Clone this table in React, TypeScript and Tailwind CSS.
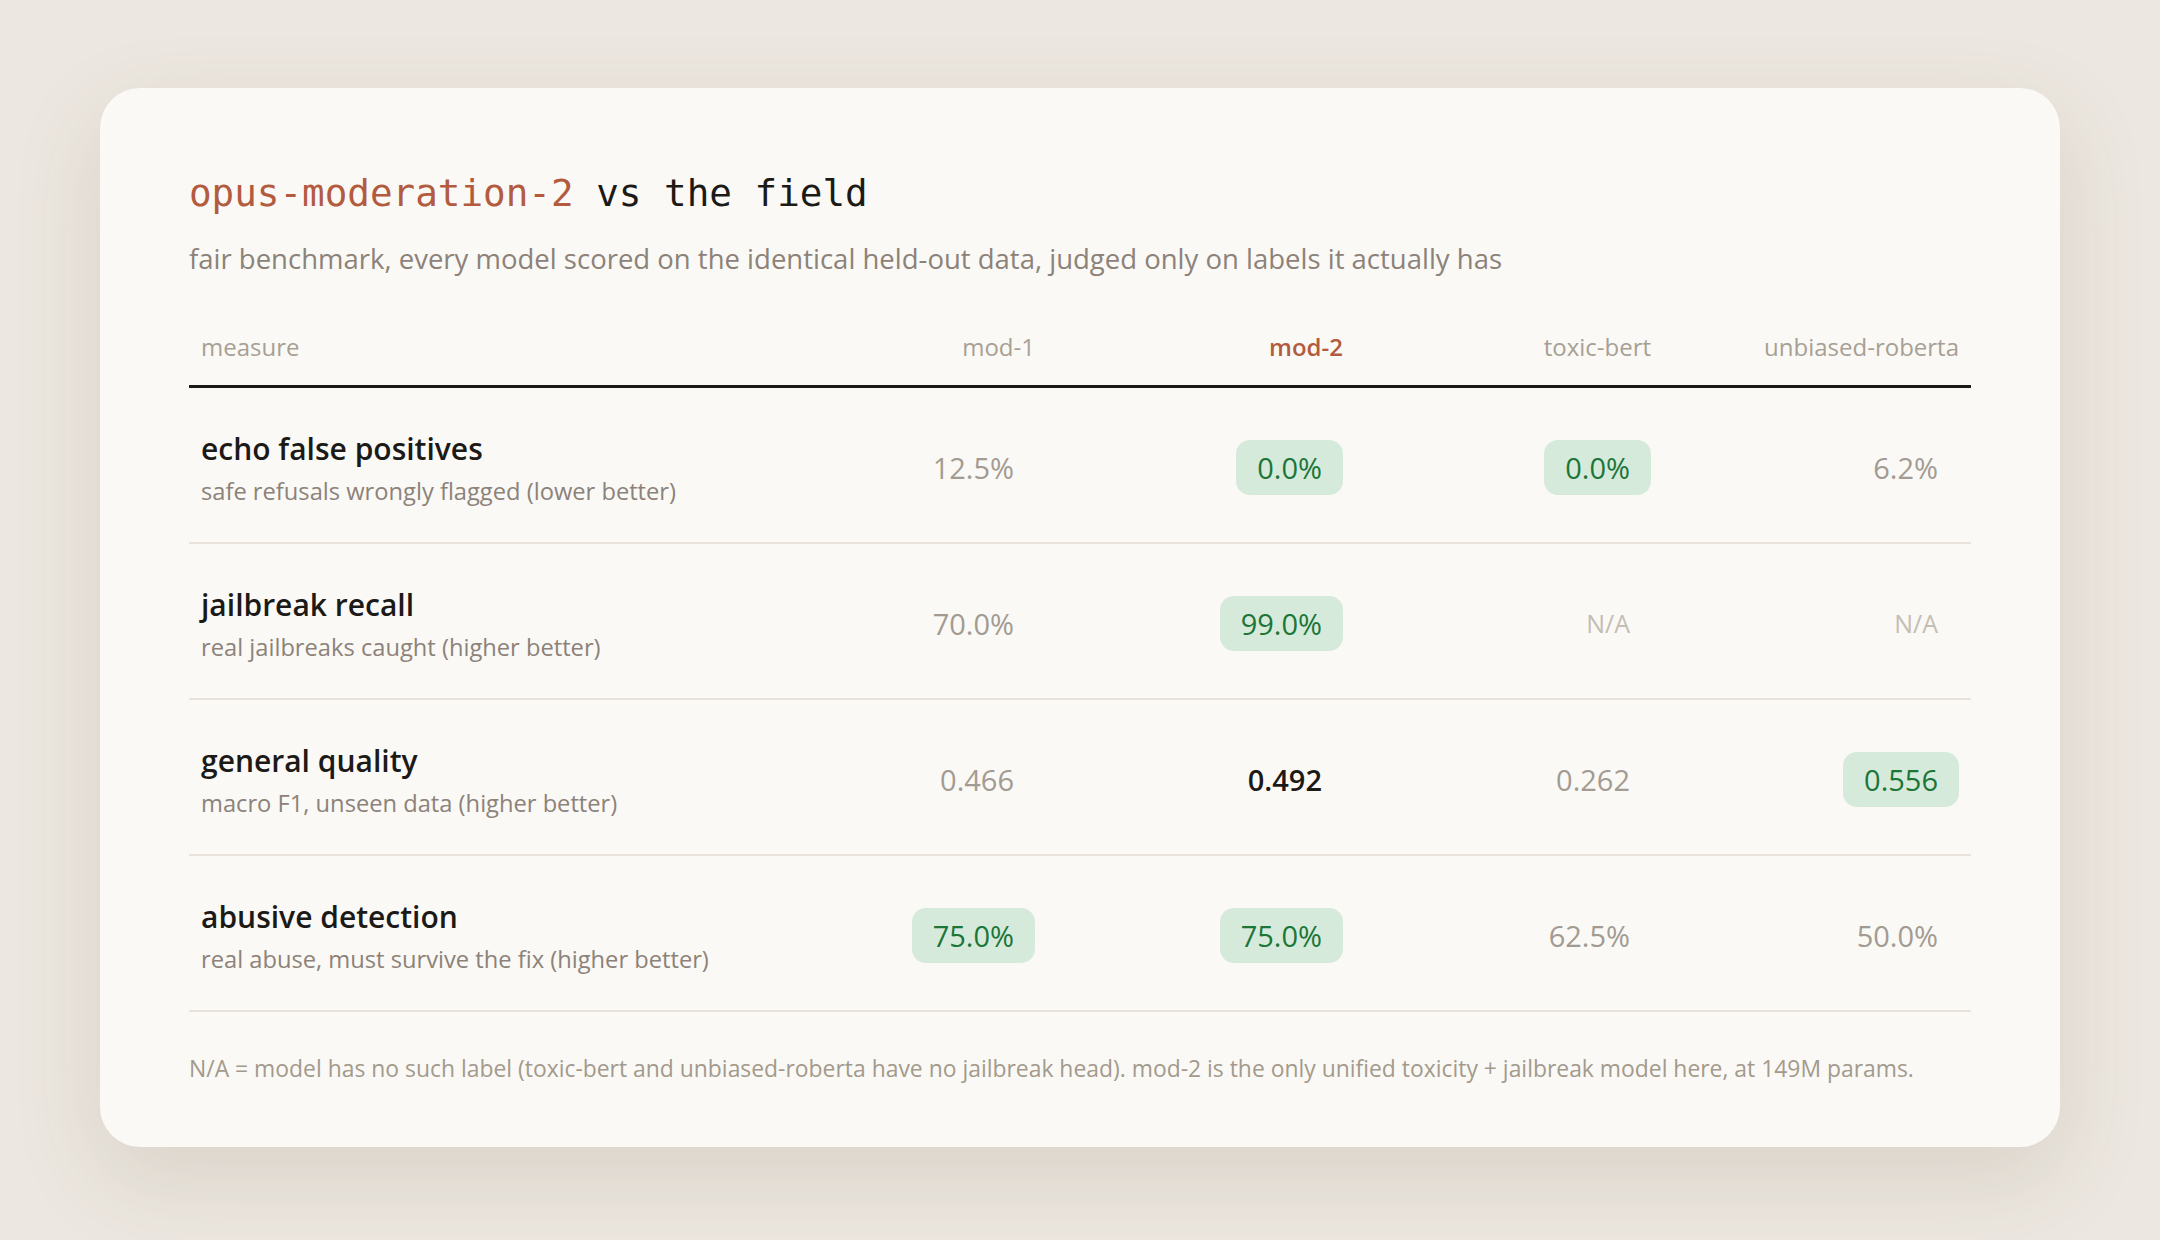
import React from "react";

type Cell = { v: string; tone?: "win" | "muted" | "na" | "strong" };

const rows: { label: string; sub: string; cells: Cell[] }[] = [
  {
    label: "echo false positives",
    sub: "safe refusals wrongly flagged (lower better)",
    cells: [{ v: "12.5%" }, { v: "0.0%", tone: "win" }, { v: "0.0%", tone: "win" }, { v: "6.2%" }],
  },
  {
    label: "jailbreak recall",
    sub: "real jailbreaks caught (higher better)",
    cells: [{ v: "70.0%" }, { v: "99.0%", tone: "win" }, { v: "N/A", tone: "na" }, { v: "N/A", tone: "na" }],
  },
  {
    label: "general quality",
    sub: "macro F1, unseen data (higher better)",
    cells: [{ v: "0.466" }, { v: "0.492", tone: "strong" }, { v: "0.262" }, { v: "0.556", tone: "win" }],
  },
  {
    label: "abusive detection",
    sub: "real abuse, must survive the fix (higher better)",
    cells: [{ v: "75.0%", tone: "win" }, { v: "75.0%", tone: "win" }, { v: "62.5%" }, { v: "50.0%" }],
  },
];

const heads = ["mod-1", "mod-2", "toxic-bert", "unbiased-roberta"];

function Value({ cell }: { cell: Cell }) {
  if (cell.tone === "win") {
    return (
      <span className="inline-block rounded-[14px] bg-[#d6eadb] px-[21px] py-[8px] text-[#1b7638] font-medium">
        {cell.v}
      </span>
    );
  }
  if (cell.tone === "strong") {
    return <span className="inline-block px-[21px] py-[8px] text-[#1c1a17] font-semibold">{cell.v}</span>;
  }
  if (cell.tone === "na") {
    return <span className="inline-block px-[21px] py-[8px] text-[25px] text-[#c4bdb4]">{cell.v}</span>;
  }
  return <span className="inline-block px-[21px] py-[8px] text-[#a39b92]">{cell.v}</span>;
}

export default function App() {
  return (
    <div
      className="min-h-screen bg-[#ece7e0] px-[100px] pt-[88px] pb-[93px]"
      style={{ fontFamily: "'Open Sans', 'Noto Sans', sans-serif" }}
    >
      <div className="rounded-[40px] bg-[#faf9f6] px-[89px] pt-[82px] pb-[62px] shadow-[0_30px_90px_rgba(90,70,40,0.13)]">
        <h1 className="text-[37.6px] leading-[46px] font-normal text-[#1c1a17]" style={{ fontFamily: "'DejaVu Sans Mono', monospace" }}>
          <span className="text-[#b35b3f]">opus-moderation-2</span> vs the field
        </h1>
        <p className="mt-[25px] text-[27.5px] leading-[36px] text-[#8c8279]">
          fair benchmark, every model scored on the identical held-out data, judged only on labels it actually has
        </p>

        <div className="mt-[53px] grid grid-cols-[550px_repeat(4,308px)]">
          <div className="border-b-[3px] border-[#1c1a17] pb-[22px] pl-3 text-[24px] leading-[33px] text-[#a89f94]">measure</div>
          {heads.map((h) => (
            <div
              key={h}
              className={
                h === "mod-2"
                  ? "border-b-[3px] border-[#1c1a17] pb-[22px] pr-3 text-right text-[24px] leading-[33px] font-semibold text-[#b35b3f]"
                  : "border-b-[3px] border-[#1c1a17] pb-[22px] pr-3 text-right text-[24px] leading-[33px] text-[#a89f94]"
              }
            >
              {h}
            </div>
          ))}

          {rows.map((r) => (
            <React.Fragment key={r.label}>
              <div className="flex h-[156px] flex-col justify-center border-b-2 border-[#e8e3db] pl-3 pt-[6px]">
                <div className="text-[30px] leading-[40px] font-semibold text-[#1c1a17]">{r.label}</div>
                <div className="mt-[6px] text-[23.7px] leading-[32px] text-[#8c8279]">{r.sub}</div>
              </div>
              {r.cells.map((c, i) => (
                <div
                  key={i}
                  className="flex h-[156px] items-center justify-end border-b-2 border-[#e8e3db] pr-3 pt-[4px] text-[29px] leading-[39px]"
                >
                  <Value cell={c} />
                </div>
              ))}
            </React.Fragment>
          ))}
        </div>

        <p className="mt-[41px] text-[22.9px] leading-[32px] text-[#a39a8c]">
          N/A = model has no such label (toxic-bert and unbiased-roberta have no jailbreak head). mod-2 is the only unified toxicity + jailbreak model here, at 149M params.
        </p>
      </div>
    </div>
  );
}
